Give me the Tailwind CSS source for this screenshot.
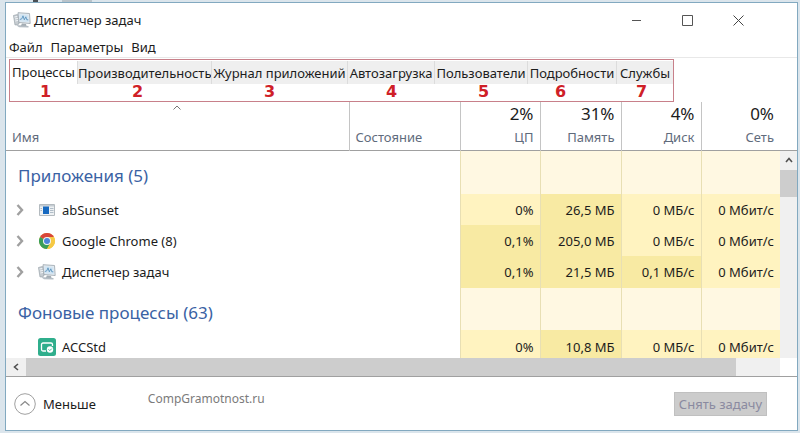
<!DOCTYPE html>
<html lang="ru">
<head>
  <meta charset="UTF-8" />
  <title>Диспетчер задач</title>
  <meta name="viewport" content="width=device-width, initial-scale=1.0" />
  <script src="https://cdn.jsdelivr.net/npm/@tailwindcss/browser@4"></script>
</head>

<body class="min-h-screen flex flex-col bg-[#dbe5ec] pl-[5px] pr-[2px] pb-[2px] font-['Noto_Sans','Open_Sans',sans-serif] text-[13px] leading-5 text-[#1c1c1c]">

  <!-- Shared icons -->
  <svg class="hidden" aria-hidden="true">
    <symbol id="taskmgr" viewBox="0 0 18 16">
      <path d="M.5 3.500l4-1 1.500 9.500-4 1z" fill="#c6ccd1" stroke="#9aa3aa" stroke-width=".7" />
      <path d="M1.500 5l3-.7M2 7l3-.7M2.300 9l3-.7" stroke="#eef2f5" />
      <path d="M5 .7l11.500.8.700 10-11.200-1z" fill="#e6ebef" stroke="#98a3ac" stroke-width=".8" />
      <path d="M6.300 2.200l9 .6.600 7.400-9-.8z" fill="#d2e5f3" />
      <path d="M6.800 7.500l2-.7 1.200-3 1.300 4 1.500-3 1 3h1.500" fill="none" stroke="#5a93bd" stroke-width=".9" />
      <path d="M9 11.500l4 .4.500 2-6 .3z" fill="#a4adb4" />
      <path d="M3 13l12.500 1v1.500L6 15.300z" fill="#b4bcc3" />
    </symbol>
    <symbol id="expand" viewBox="0 0 8 12">
      <path d="M1.500 1L6 6l-4.500 5" fill="none" stroke="#a0a0a0" stroke-width="2.400" />
    </symbol>
  </svg>

  <!-- Desktop strip behind the window -->
  <div class="h-[2px] flex" aria-hidden="true">
    <div class="ml-[28px] w-[5px] bg-[#4a4f54]"></div>
    <div class="ml-[24px] w-[30px] bg-[#b9c3ca]"></div>
  </div>

  <main class="flex-1 flex flex-col bg-white border border-[#82a9c0]">

    <!-- Title bar -->
    <header class="h-[34px] flex items-center pl-[7px]">
      <svg class="w-[18px] h-4"><use href="#taskmgr" /></svg>
      <h1 class="ml-[3px] flex-1">Диспетчер задач</h1>
      <button aria-label="Свернуть" class="w-[51px] h-full flex items-center justify-center">
        <svg class="size-[11px]" viewBox="0 0 11 11"><path d="M1 5.500h9" stroke="#555" /></svg>
      </button>
      <button aria-label="Развернуть" class="w-[51px] h-full flex items-center justify-center">
        <svg class="size-[11px]" viewBox="0 0 11 11"><path d="M.5.5h10v10H.5z" fill="none" stroke="#555" /></svg>
      </button>
      <button aria-label="Закрыть" class="w-[51px] h-full flex items-center justify-center mr-[33px]">
        <svg class="size-[11px]" viewBox="0 0 11 11"><path d="M.5.5l10 10M10.500.5l-10 10" stroke="#444" /></svg>
      </button>
    </header>

    <!-- Menu -->
    <nav class="h-5 flex gap-2 pl-[3px]">
      <button>Файл</button>
      <button>Параметры</button>
      <button>Вид</button>
    </nav>

    <!-- Tabs -->
    <section class="border-t border-[#e8e8e8] pt-[1px] pl-[3px]">
      <div class="w-[665px] h-[43px] border border-[#c8808a]">
        <div role="tablist" class="flex h-6 pt-[1px] whitespace-nowrap">
          <button role="tab" aria-selected="true" class="w-[67px] pb-[2px] bg-white">Процессы</button>
          <button role="tab" class="w-[134px] border-l border-[#dcdcdc] bg-[#efefef]">Производительность</button>
          <button role="tab" class="w-[136px] border-l border-[#dcdcdc] bg-[#efefef]">Журнал приложений</button>
          <button role="tab" class="w-[87px] border-l border-[#dcdcdc] bg-[#efefef]">Автозагрузка</button>
          <button role="tab" class="w-[93px] border-l border-[#dcdcdc] bg-[#efefef]">Пользователи</button>
          <button role="tab" class="w-[89px] border-l border-[#dcdcdc] bg-[#efefef]">Подробности</button>
          <button role="tab" class="flex-1 border-l border-[#dcdcdc] bg-[#efefef]">Службы</button>
        </div>
        <div class="flex pl-[30px] font-['DejaVu_Sans',sans-serif] text-base leading-4 font-bold text-[#cf2027]">
          <span class="w-[92px]">1</span>
          <span class="w-[132px]">2</span>
          <span class="w-[122px]">3</span>
          <span class="w-[92px]">4</span>
          <span class="w-[77px]">5</span>
          <span class="w-[81px]">6</span>
          <span>7</span>
        </div>
      </div>
    </section>

    <!-- Process list -->
    <table class="w-full table-fixed border-collapse">
      <colgroup>
        <col />
        <col class="w-[111px]" />
        <col class="w-[80px]" />
        <col class="w-[81px]" />
        <col class="w-[80px]" />
        <col class="w-[79px]" />
        <col class="w-[17px]" />
      </colgroup>
      <thead>
        <tr class="h-[48px] border-b border-[#a0a0a0] align-bottom text-right text-[#5f6b7c]">
          <th class="border-r border-[#c4c4c4] px-[6px] pb-[3px] font-normal text-left">
            <svg class="mx-auto mb-[17px] w-2 h-[5px]" viewBox="0 0 8 5"><path d="M.5 4.500L4 1l3.500 3.500" fill="none" stroke="#777" /></svg>
            Имя
          </th>
          <th class="border-r border-[#c4c4c4] px-[6px] pb-[3px] font-normal text-left">Состояние</th>
          <th class="border-r border-[#c4c4c4] px-[6px] pb-[3px] font-normal"><div class="mb-[2px] text-[17px] leading-[22px] text-[#1c1c1c]">2%</div>ЦП</th>
          <th class="border-r border-[#c4c4c4] px-[6px] pb-[3px] font-normal"><div class="mb-[2px] text-[17px] leading-[22px] text-[#1c1c1c]">31%</div>Память</th>
          <th class="border-r border-[#c4c4c4] px-[6px] pb-[3px] font-normal"><div class="mb-[2px] text-[17px] leading-[22px] text-[#1c1c1c]">4%</div>Диск</th>
          <th class="px-[6px] pb-[3px] font-normal"><div class="mb-[2px] text-[17px] leading-[22px] text-[#1c1c1c]">0%</div>Сеть</th>
          <td></td>
        </tr>
      </thead>
      <tbody class="text-right whitespace-nowrap">
        <tr class="h-[44px]">
          <th colspan="2" class="pl-3 pt-2 text-left text-[17px] font-normal text-[#3a62a4]">Приложения (5)</th>
          <td class="border-l border-[#e8dfb4] bg-[#fff8e2]"></td>
          <td class="border-l border-[#e8dfb4] bg-[#fff8e2]"></td>
          <td class="border-l border-[#e8dfb4] bg-[#fff8e2]"></td>
          <td class="border-l border-[#e8dfb4] bg-[#fff8e2]"></td>
          <!-- Vertical scroll bar -->
          <td rowspan="6" class="bg-[#f0f0f0] align-top">
            <button aria-label="Вверх" class="w-full h-[19px] flex items-center justify-center">
              <svg class="w-2 h-[6px]" viewBox="0 0 8 6"><path d="M1 5l3-3.500L7 5" fill="none" stroke="#505050" stroke-width="1.600" /></svg>
            </button>
            <div class="h-[27px] bg-[#cdcdcd]"></div>
          </td>
        </tr>
        <tr class="h-[31px]">
          <td colspan="2" class="pl-[10px]">
            <div class="flex items-center">
              <svg class="w-2 h-3"><use href="#expand" /></svg>
              <svg class="ml-[15px] w-4 h-3" viewBox="0 0 16 12">
                <path d="M.5.5h15v11H.5z" fill="#eef1f3" stroke="#b3babf" />
                <path d="M1 1h14v1.500H1z" fill="#c5ccd2" />
                <path d="M4 2.500h6v7.500H4z" fill="#1769c0" />
                <path d="M11 4.500h3.500M11 6.500h3.500M11 8.500h3.500M1.500 4.500h1.500M1.500 6.500h1.500" stroke="#9fb0bd" stroke-width=".8" />
              </svg>
              <span class="ml-[7px]">abSunset</span>
            </div>
          </td>
          <td class="border-l border-[#e8dfb4] bg-[#fff3c0] pr-[6px]">0%</td>
          <td class="border-l border-[#e8dfb4] bg-[#f8eaa3] pr-[6px]">26,5 МБ</td>
          <td class="border-l border-[#e8dfb4] bg-[#fff3c0] pr-[6px]">0 МБ/с</td>
          <td class="border-l border-[#e8dfb4] bg-[#fff3c0] pr-[6px]">0 Мбит/с</td>
        </tr>
        <tr class="h-[31px]">
          <td colspan="2" class="pl-[10px]">
            <div class="flex items-center">
              <svg class="w-2 h-3"><use href="#expand" /></svg>
              <svg class="ml-[15px] size-4" viewBox="0 0 16 16">
                <circle cx="8" cy="8" r="8" fill="#f6c944" />
                <path d="M8 8L1.070 4A8 8 0 0 1 14.930 4z" fill="#d8463b" />
                <path d="M1.070 4A8 8 0 0 0 8 16l3.500-6L8 8z" fill="#3a9e57" />
                <path d="M14.930 4H8l3.460 6L8 16a8 8 0 0 0 6.930-12z" fill="#f6c944" />
                <circle cx="8" cy="8" r="4" fill="#f4f4f4" />
                <circle cx="8" cy="8" r="3" fill="#4c86d8" />
              </svg>
              <span class="ml-[7px]">Google Chrome (8)</span>
            </div>
          </td>
          <td class="border-l border-[#e8dfb4] bg-[#f8eaa3] pr-[6px]">0,1%</td>
          <td class="border-l border-[#e8dfb4] bg-[#f8eaa3] pr-[6px]">205,0 МБ</td>
          <td class="border-l border-[#e8dfb4] bg-[#fff3c0] pr-[6px]">0 МБ/с</td>
          <td class="border-l border-[#e8dfb4] bg-[#fff3c0] pr-[6px]">0 Мбит/с</td>
        </tr>
        <tr class="h-[32px]">
          <td colspan="2" class="pl-[10px]">
            <div class="flex items-center">
              <svg class="w-2 h-3"><use href="#expand" /></svg>
              <svg class="ml-[14px] w-[18px] h-4"><use href="#taskmgr" /></svg>
              <span class="ml-[6px]">Диспетчер задач</span>
            </div>
          </td>
          <td class="border-l border-[#e8dfb4] bg-[#f8eaa3] pr-[6px]">0,1%</td>
          <td class="border-l border-[#e8dfb4] bg-[#f8eaa3] pr-[6px]">21,5 МБ</td>
          <td class="border-l border-[#e8dfb4] bg-[#f8eaa3] pr-[6px]">0,1 МБ/с</td>
          <td class="border-l border-[#e8dfb4] bg-[#fff3c0] pr-[6px]">0 Мбит/с</td>
        </tr>
        <tr class="h-[42px]">
          <th colspan="2" class="pl-3 pt-2 text-left text-[17px] font-normal text-[#3a62a4]">Фоновые процессы (63)</th>
          <td class="border-l border-[#e8dfb4] bg-[#fff8e2]"></td>
          <td class="border-l border-[#e8dfb4] bg-[#fff8e2]"></td>
          <td class="border-l border-[#e8dfb4] bg-[#fff8e2]"></td>
          <td class="border-l border-[#e8dfb4] bg-[#fff8e2]"></td>
        </tr>
        <tr class="h-[28px]">
          <td colspan="2" class="pl-[32px] pt-[5px]">
            <div class="flex items-center">
              <svg class="size-[18px]" viewBox="0 0 18 18">
                <rect width="18" height="18" rx="2.500" fill="#2fae8c" />
                <path d="M8 13H5a1.500 1.500 0 0 1-1.500-1.500v-5A1.500 1.500 0 0 1 5 5h8a1.500 1.500 0 0 1 1.500 1.500V8" fill="none" stroke="#fff" stroke-width="1.300" />
                <circle cx="12" cy="11.500" r="3.200" fill="#fff" />
                <path d="M10.500 11.300l1.300 1.300 2-2" fill="none" stroke="#2fae8c" stroke-width=".9" />
              </svg>
              <span class="ml-[6px]">ACCStd</span>
            </div>
          </td>
          <td class="border-l border-[#e8dfb4] bg-[#fff3c0] pr-[6px] pt-[5px]">0%</td>
          <td class="border-l border-[#e8dfb4] bg-[#f8eaa3] pr-[6px] pt-[5px]">10,8 МБ</td>
          <td class="border-l border-[#e8dfb4] bg-[#fff3c0] pr-[6px] pt-[5px]">0 МБ/с</td>
          <td class="border-l border-[#e8dfb4] bg-[#fff3c0] pr-[6px] pt-[5px]">0 Мбит/с</td>
        </tr>
      </tbody>
    </table>

    <!-- Horizontal scroll bar -->
    <div class="h-[19px] flex border-b border-[#a0a0a0] pr-[17px]">
      <button aria-label="Влево" class="w-[20px] flex items-center justify-center bg-[#f0f0f0]">
        <svg class="w-[6px] h-2" viewBox="0 0 6 8"><path d="M5 1L1.500 4 5 7" fill="none" stroke="#505050" stroke-width="1.600" /></svg>
      </button>
      <div class="flex-1 bg-[#cdcdcd]"></div>
      <div class="w-[44px] bg-[#f0f0f0]"></div>
    </div>

    <!-- Footer -->
    <footer class="flex-1 flex items-center pl-2 pr-[30px]">
      <button class="flex items-center gap-[7px]">
        <svg class="size-[22px]" viewBox="0 0 22 22">
          <circle cx="11" cy="11" r="10.300" fill="none" stroke="#a0a0a0" />
          <path d="M6.500 12.500L11 8.500l4.500 4" fill="none" stroke="#888" stroke-width="1.200" />
        </svg>
        Меньше
      </button>
      <a href="#" class="ml-[52px] mb-[9px] text-xs text-[#7b7b7b]">CompGramotnost.ru</a>
      <button disabled class="ml-auto w-[93px] h-6 border border-[#c0c0c0] bg-[#cccccc] text-[#8a8aa0] whitespace-nowrap">Снять задачу</button>
    </footer>
  </main>

</body>
</html>
